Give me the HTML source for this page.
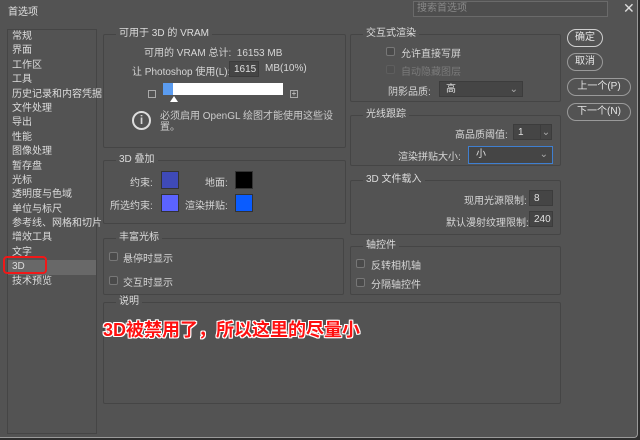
<!DOCTYPE html>
<html><head><meta charset="utf-8"><style>
*{margin:0;padding:0;box-sizing:border-box}
body{width:640px;height:440px;background:#2e2e2e;overflow:hidden;font-family:"Liberation Sans","Noto Sans CJK SC",sans-serif;font-size:10px;color:#d6d6d6;position:relative}
.win{position:absolute;left:0;top:0;width:638px;height:438px;background:#535353;border-right:1px solid #999;border-bottom:1px solid #999;border-radius:0 0 4px 0}
.a{position:absolute;white-space:nowrap}
.g{position:absolute;border:1px solid #454545;border-radius:2px}
.gt{position:absolute;top:-7px;left:12px;background:#535353;padding:0 3px;color:#dcdcdc;font-size:10px;line-height:12px}
.cb{position:absolute;width:9px;height:9px;border:1px solid #777;border-radius:2px;background:#4a4a4a}
.in{position:absolute;background:#454545;border:1px solid #3c3c3c;color:#e0e0e0;padding-left:4px;line-height:15px}
.btn{position:absolute;border:1px solid #9a9a9a;border-radius:9px;text-align:center;line-height:16px;color:#e6e6e6}
.side div{height:14.4px;line-height:14.4px;padding-left:4px}
</style></head><body>
<div class="win">
<div class="a" style="left:8px;top:3px;color:#e0e0e0">首选项</div>
<div class="a" style="left:413px;top:1px;width:195px;height:16px;border:1px solid #6a6a6a;background:#4e4e4e;color:#8a8a8a;padding-left:3px;line-height:14px">搜索首选项</div>
<div class="a" style="left:623px;top:0px;font-size:14px;color:#ddd">✕</div>

<div class="a side" style="left:7px;top:29px;width:90px;height:405px;border:1px solid #454545;padding-top:0px;color:#dcdcdc">
<div style="margin-top:0">常规</div><div>界面</div><div>工作区</div><div>工具</div><div>历史记录和内容凭据</div><div>文件处理</div><div>导出</div><div>性能</div><div>图像处理</div><div>暂存盘</div><div>光标</div><div>透明度与色域</div><div>单位与标尺</div><div>参考线、网格和切片</div><div>增效工具</div><div>文字</div><div style="background:#686868">3D</div><div>技术预览</div>
</div>
<div class="a" style="left:3px;top:256px;width:44px;height:18px;border:2px solid #f01818;border-radius:4px"></div>

<div class="g" style="left:103px;top:34px;width:243px;height:114px"><div class="gt">可用于 3D 的 VRAM</div></div>
<div class="a" style="left:144px;top:44px">可用的 VRAM 总计:&nbsp;&nbsp;16153 MB</div>
<div class="a" style="left:132px;top:63px">让 Photoshop 使用(L):</div>
<div class="in" style="left:229px;top:61px;width:30px;height:16px">1615</div>
<div class="a" style="left:265px;top:63px">MB(10%)</div>
<div class="a" style="left:148px;top:90px;width:8px;height:8px;border:1px solid #aaa"></div>
<div class="a" style="left:163px;top:83px;width:120px;height:12px;background:#fff"></div>
<div class="a" style="left:163px;top:83px;width:10px;height:12px;background:#5b9cf0"></div>
<div class="a" style="left:170px;top:96px;width:0;height:0;border-left:4px solid transparent;border-right:4px solid transparent;border-bottom:6px solid #fff"></div>
<div class="a" style="left:290px;top:90px;width:8px;height:8px;border:1px solid #aaa;font-size:8px;line-height:6px;text-align:center">+</div>
<div class="a" style="left:132px;top:111px;width:19px;height:19px;border:2px solid #ddd;border-radius:50%;text-align:center;font-size:12px;line-height:15px;font-weight:bold">i</div>
<div class="a" style="left:160px;top:111px;line-height:11px;color:#ccc">必须启用 OpenGL 绘图才能使用这些设<br>置。</div>

<div class="g" style="left:103px;top:160px;width:243px;height:64px"><div class="gt">3D 叠加</div></div>
<div class="a" style="left:130px;top:174px">约束:</div>
<div class="a" style="left:161px;top:171px;width:18px;height:18px;background:#3f4ab8;border:1px solid #333"></div>
<div class="a" style="left:205px;top:174px">地面:</div>
<div class="a" style="left:235px;top:171px;width:18px;height:18px;background:#000;border:1px solid #333"></div>
<div class="a" style="left:110px;top:197px">所选约束:</div>
<div class="a" style="left:161px;top:194px;width:18px;height:18px;background:#5b63ff;border:1px solid #333"></div>
<div class="a" style="left:185px;top:197px">渲染拼贴:</div>
<div class="a" style="left:235px;top:194px;width:18px;height:18px;background:#0a5cff;border:1px solid #333"></div>

<div class="g" style="left:103px;top:238px;width:241px;height:57px"><div class="gt">丰富光标</div></div>
<div class="cb" style="left:109px;top:252px"></div><div class="a" style="left:123px;top:250px">悬停时显示</div>
<div class="cb" style="left:109px;top:276px"></div><div class="a" style="left:123px;top:274px">交互时显示</div>

<div class="g" style="left:103px;top:302px;width:458px;height:102px"><div class="gt">说明</div></div>
<div class="a" style="left:103px;top:316px;font-size:18px;font-weight:bold;color:#ff1010;text-shadow:-1px -1px 0 #fff,1px -1px 0 #fff,-1px 1px 0 #fff,1px 1px 0 #fff,0 1px 0 #fff,0 -1px 0 #fff,1px 0 0 #fff,-1px 0 0 #fff">3D被禁用了，所以这里的尽量小</div>

<div class="g" style="left:350px;top:34px;width:211px;height:68px"><div class="gt">交互式渲染</div></div>
<div class="cb" style="left:386px;top:47px"></div><div class="a" style="left:401px;top:45px">允许直接写屏</div>
<div class="cb" style="left:386px;top:65px;border-color:#5e5e5e;background:#505050"></div><div class="a" style="left:401px;top:63px;color:#7a7a7a">自动隐藏图层</div>
<div class="a" style="left:388px;top:83px">阴影品质:</div>
<div class="in" style="left:439px;top:81px;width:84px;height:16px;padding-left:6px">高<span style="position:absolute;right:4px;color:#aaa">⌄</span></div>

<div class="g" style="left:350px;top:115px;width:211px;height:51px"><div class="gt">光线跟踪</div></div>
<div class="a" style="left:455px;top:126px">高品质阈值:</div>
<div class="in" style="left:513px;top:124px;width:39px;height:16px">1<span style="position:absolute;right:0;top:0;width:11px;height:14px;border-left:1px solid #3c3c3c;text-align:center;color:#aaa">⌄</span></div>
<div class="a" style="left:398px;top:148px">渲染拼贴大小:</div>
<div class="in" style="left:468px;top:146px;width:85px;height:18px;border-color:#3f7fd0;padding-left:7px;line-height:16px">小<span style="position:absolute;right:4px;color:#aaa">⌄</span></div>

<div class="g" style="left:350px;top:180px;width:211px;height:55px"><div class="gt">3D 文件载入</div></div>
<div class="a" style="left:464px;top:192px">现用光源限制:</div>
<div class="in" style="left:529px;top:190px;width:24px;height:16px">8</div>
<div class="a" style="left:446px;top:214px">默认漫射纹理限制:</div>
<div class="in" style="left:529px;top:211px;width:24px;height:16px">240</div>

<div class="g" style="left:350px;top:246px;width:211px;height:49px"><div class="gt">轴控件</div></div>
<div class="cb" style="left:356px;top:259px"></div><div class="a" style="left:371px;top:257px">反转相机轴</div>
<div class="cb" style="left:356px;top:278px"></div><div class="a" style="left:371px;top:276px">分隔轴控件</div>

<div class="btn" style="left:567px;top:29px;width:36px;height:18px;border-color:#cfcfcf;border-width:1.5px">确定</div>
<div class="btn" style="left:567px;top:53px;width:36px;height:18px">取消</div>
<div class="btn" style="left:567px;top:78px;width:64px;height:18px">上一个(P)</div>
<div class="btn" style="left:567px;top:103px;width:64px;height:18px">下一个(N)</div>
</div>
</body></html>
